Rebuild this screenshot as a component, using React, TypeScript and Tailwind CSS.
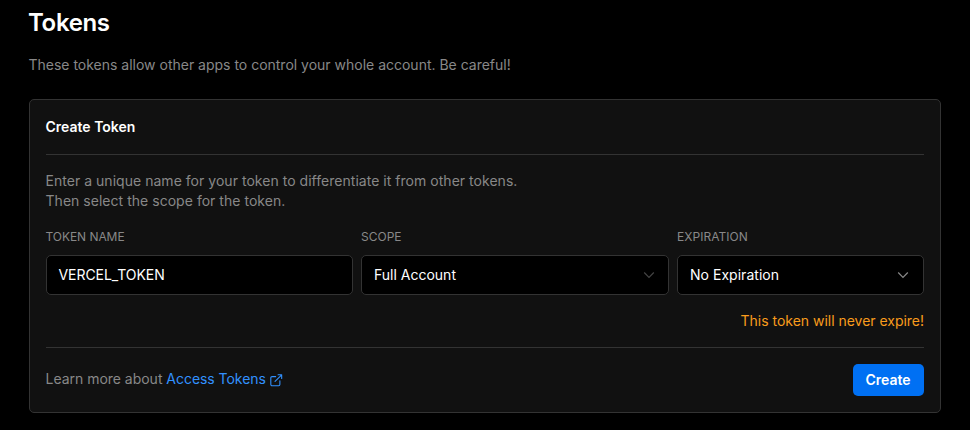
import React from "react";

function Chevron({ color }: { color: string }) {
  return (
    <svg width="16" height="16" viewBox="0 0 16 16" fill="none" className="shrink-0">
      <path d="M3.2 5.5 L8 10.3 L12.8 5.5" stroke={color} strokeWidth="1.2" />
    </svg>
  );
}

function Field({ label, value, chevron, pad = "pr-3", text = "" }: { label: string; value: string; chevron?: string; pad?: string; text?: string }) {
  return (
    <div>
      <div className={`text-[12px] leading-[16px] text-[#888888] ${text}`}>{label}</div>
      <div className={`mt-[10px] flex h-10 items-center justify-between rounded-[5px] border border-[#333333] bg-black pl-3 text-[14px] text-white ${pad}`}>
        <span className={`pb-px leading-[20px] ${text}`}>{value}</span>
        {chevron && <Chevron color={chevron} />}
      </div>
    </div>
  );
}

export default function App() {
  return (
    <main className="h-[430px] w-[970px] overflow-hidden bg-black px-[29px] font-['Inter',sans-serif] text-[14px] text-[#888888]">
      <h1 className="-ml-px pt-[7px] text-[24px] leading-[32px] font-semibold tracking-[-0.35px] text-white">Tokens</h1>
      <p className="-ml-[0.5px] mt-[16px] leading-[20px] tracking-[-0.006px]">These tokens allow other apps to control your whole account. Be careful!</p>
      <section className="mt-[24px] h-[314px] w-[912px] rounded-[5px] border border-[#333333] bg-[#111111] px-4">
        <h2 className="-ml-[0.5px] pt-[17px] leading-[20px] font-semibold text-white">Create Token</h2>
        <div className="mt-[17px] border-t border-[#333333] pt-4 leading-[20px]">
          <p className="-ml-[0.5px] tracking-[0.03px]">Enter a unique name for your token to differentiate it from other tokens.</p>
          <p className="-ml-[0.5px] tracking-[0.03px]">Then select the scope for the token.</p>
        </div>
        <div className="mt-[18px] grid grid-cols-[307px_308px_247px] gap-2">
          <Field label="TOKEN NAME" value="VERCEL_TOKEN" text="-ml-[0.5px] tracking-[-0.06px]" />
          <Field label="SCOPE" value="Full Account" chevron="#444444" pad="pr-[11px]" />
          <Field label="EXPIRATION" value="No Expiration" chevron="#888888" text="tracking-[0.03px]" />
        </div>
        <p className="mt-4 text-right leading-[20px] tracking-[-0.02px] text-[#f99c1c]">This token will never expire!</p>
        <footer className="mt-4 flex items-center justify-between border-t border-[#333333] pt-4">
          <p className="-ml-[0.5px] flex items-center leading-[20px] tracking-[-0.02px]">
            <span className="pb-[2px]">Learn more about&nbsp;</span>
            <a className="flex items-center gap-[3px] text-[#3291ff]">
              <span className="pb-[2px] tracking-[-0.04px]">Access Tokens</span>
              <svg width="14.5" height="14.5" viewBox="0 0 24 24" fill="none" stroke="currentColor" strokeWidth="1.8" strokeLinecap="round" strokeLinejoin="round">
                <path d="M18 13v6a2 2 0 0 1-2 2H5a2 2 0 0 1-2-2V8a2 2 0 0 1 2-2h6M15 3h6v6M10 14L21 3" />
              </svg>
            </a>
          </p>
          <button className="h-8 w-[71px] rounded-[5px] bg-[#0070f3] pr-px pb-[2px] text-[14px] font-semibold text-white">Create</button>
        </footer>
      </section>
    </main>
  );
}
